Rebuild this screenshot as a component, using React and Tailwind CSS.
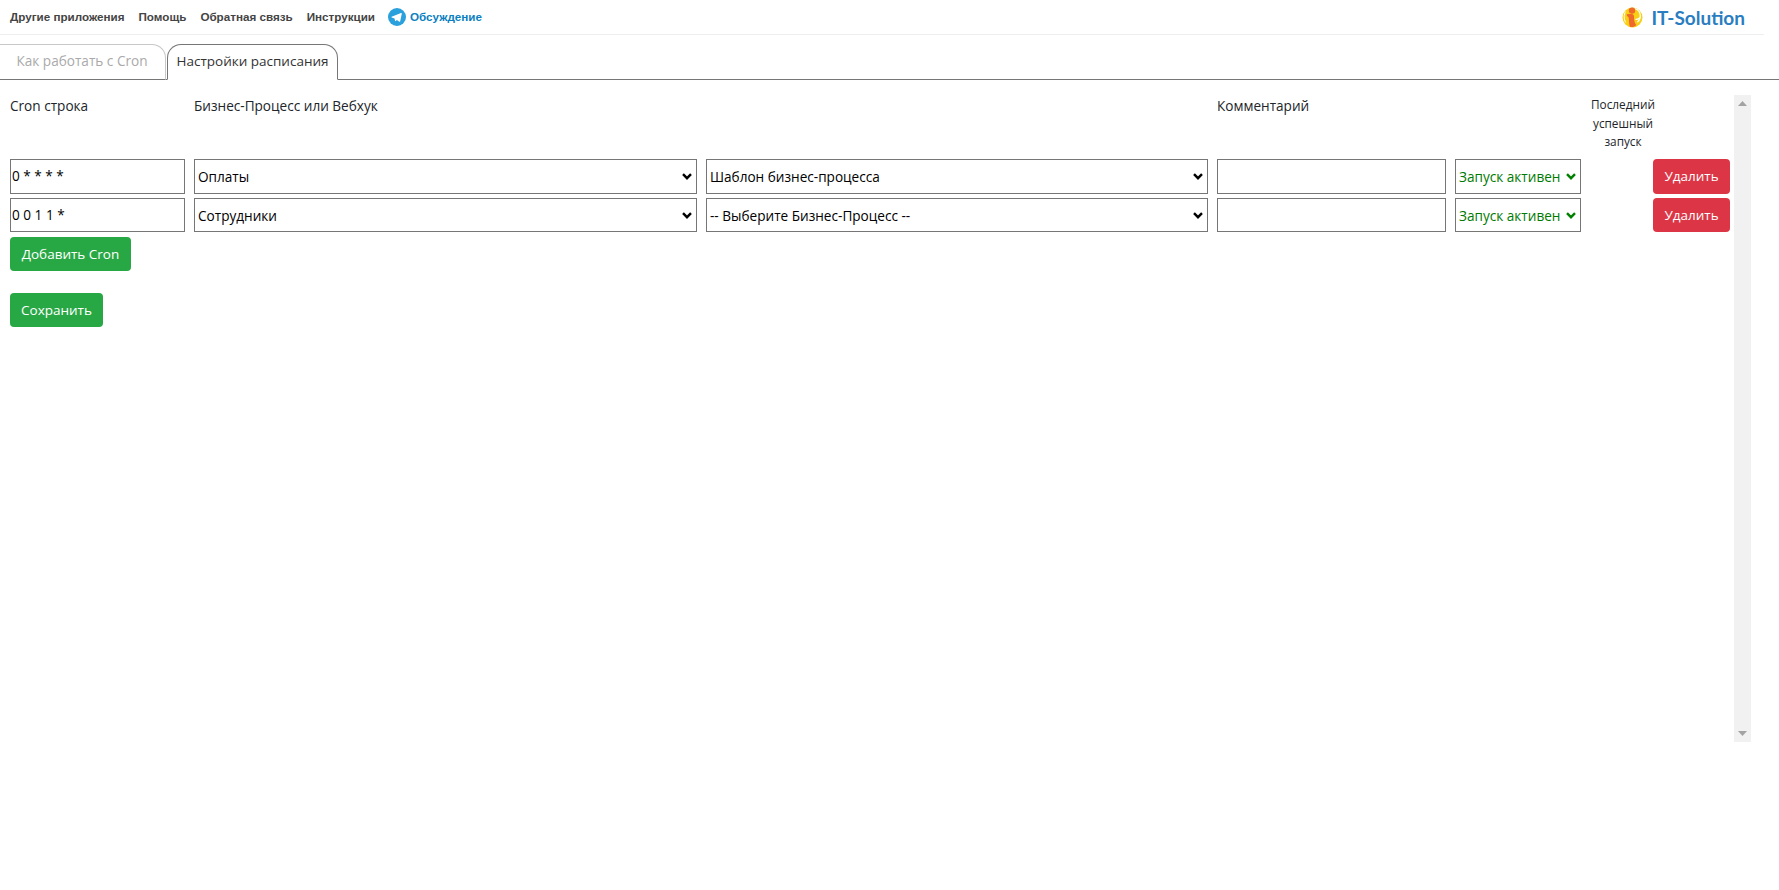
import React from "react";

const seg = { fontFamily: '"Open Sans", "Noto Sans", sans-serif' };

function Telegram() {
  return (
    <svg width="18" height="18" viewBox="0 0 18 18" className="shrink-0">
      <circle cx="9" cy="9" r="9" fill="#2aa0dc" />
      <path d="M3.600 8.800 13 5.100c.5-.2.900.1.800.7l-1.600 7.500c-.1.500-.5.700-.9.400L8.900 12l-1.200 1.100c-.2.200-.4.200-.5-.1l-.7-2.600-2.800-.9c-.5-.2-.5-.5-.1-.7Z" fill="#fff" />
    </svg>
  );
}

function Logo() {
  return (
    <svg width="21" height="21" viewBox="0 0 21 21" className="shrink-0">
      <circle cx="10.500" cy="10.500" r="10" fill="#f8cf13" />
      <path d="M12.800 1.500c3.200 1 5.500 4 5.500 7.500 0 2.500-1.100 4.700-2.900 6.200" fill="none" stroke="#fff" strokeWidth="1.300" />
      <path d="M13.500 12.300c2 .3 3.500-.5 4.600-2" fill="none" stroke="#fff" strokeWidth="1.200" />
      <circle cx="10" cy="3.600" r="3.200" fill="#f0692c" />
      <path d="M4.500 7.500c1.500-.5 3.200-.6 5-.4 1.600.2 2.500 1 2.500 2.600 0 3.200.3 6 2.300 8.300-1.500 1.700-4.300 2.600-6.400 1.800-1-3-.9-6.500-1.200-9.300C5.800 9.700 5 9 4.500 7.500Z" fill="#f0692c" />
      <path d="M3.700 4.500C1.700 7.500 1.700 12 3.700 15.500" fill="none" stroke="#fff" strokeWidth="1" />
    </svg>
  );
}

function Field({ children, className = "" }) {
  return (
    <div className={`flex items-center border border-[#767676] bg-white text-[13.6px] ${className}`}>
      {children}
    </div>
  );
}

function Chevron({ color = "#000" }) {
  return (
    <svg width="10" height="7" viewBox="0 0 10 7" className="shrink-0">
      <path d="M1 1.200 5 5.200 9 1.200" fill="none" stroke={color} strokeWidth="2.400" />
    </svg>
  );
}

function SelectBox({ label, className = "", green = false }) {
  return (
    <Field className={`justify-between pl-[2px] pr-[4px] ${green ? "text-[#007a00]" : "text-black"} ${className}`}>
      <span className="whitespace-nowrap pl-px pt-[2px]">{label}</span>
      <Chevron color={green ? "#008000" : "#000"} />
    </Field>
  );
}

function Btn({ children, red = false, className = "" }) {
  return (
    <button className={`flex h-[34px] items-center justify-center rounded-[4px] text-[13.5px] text-white ${red ? "bg-[#dc3545]" : "bg-[#28a745]"} ${className}`}>
      {children}
    </button>
  );
}

function Row({ cron, group, template, h }) {
  return (
    <div className={`flex ${h}`}>
      <Field className="w-[175px] pl-px text-black"><span>{cron}</span></Field>
      <SelectBox label={group} className="ml-[9px] w-[503px]" />
      <SelectBox label={template} className="ml-[9px] w-[502px]" />
      <Field className="ml-[9px] w-[229px]" />
      <SelectBox label="Запуск активен" green className="ml-[9px] w-[126px]" />
      <Btn red className="ml-[72px] h-full w-[77px]">Удалить</Btn>
    </div>
  );
}

export default function App() {
  return (
    <div className="h-[890px] w-full overflow-hidden bg-white text-[#212529]" style={seg}>
      <header className="flex h-[35px] w-[1764px] items-center justify-between border-b border-[#eeeeee] pl-[10px] pr-[19px]">
        <nav className="flex items-center text-[11.65px] font-bold text-[#444444]" style={{ fontFamily: '"Liberation Sans", sans-serif' }}>
          <a>Другие приложения</a>
          <a className="ml-[14px]">Помощь</a>
          <a className="ml-[14px]">Обратная связь</a>
          <a className="ml-[14px]">Инструкции</a>
          <a className="ml-[13px] flex items-center gap-[4px] text-[#0b7fc1]"><Telegram />Обсуждение</a>
        </nav>
        <div className="flex items-center gap-[8px]">
          <Logo />
          <span className="text-[19px] font-bold leading-none text-[#2a7dc0]" style={{ fontFamily: 'Lato, sans-serif' }}>IT-Solution</span>
        </div>
      </header>

      <div className="mt-[9px] flex h-[36px] border-b border-[#767676] text-[13.6px]">
        <div className="-ml-[14px] -mb-px flex w-[180px] items-center justify-center rounded-t-[14px] border border-[#c8c8c8] border-b-[#767676] pb-[2px] pl-[12px] text-[#aaaaaa]">Как работать с Cron</div>
        <div className="-mb-px ml-px flex w-[171px] items-center justify-center rounded-t-[14px] border border-[#767676] border-b-white pb-[2px] text-[13.5px] text-[#333333]">Настройки расписания</div>
      </div>

      <div className="flex pl-[10px] pt-[15px]">
        <main className="w-[1724px]">
          <div className="flex h-[64px] text-[13.6px] leading-[21px]">
            <div className="w-[184px]">Cron строка</div>
            <div className="w-[1023px]">Бизнес-Процесс или Вебхук</div>
            <div className="w-[371px]">Комментарий</div>
            <div className="w-[70px] text-center text-[11.8px] leading-[18.5px]">Последний успешный запуск</div>
          </div>
          <div className="flex flex-col gap-[4px]">
            <Row cron="0 * * * *" group="Оплаты" template="Шаблон бизнес-процесса" h="h-[35px]" />
            <Row cron="0 0 1 1 *" group="Сотрудники" template="-- Выберите Бизнес-Процесс --" h="h-[34px]" />
          </div>
          <Btn className="mt-[5px] w-[121px]">Добавить Cron</Btn>
          <Btn className="mt-[22px] w-[93px]">Сохранить</Btn>
        </main>
        <div className="flex h-[647px] w-[17px] flex-col items-center justify-between bg-[#f1f1f1] py-[6px]">
          <svg width="9" height="5" viewBox="0 0 9 5"><path d="M4.500 0 9 5H0Z" fill="#a3a3a3" /></svg>
          <svg width="9" height="5" viewBox="0 0 9 5"><path d="M0 0h9L4.500 5Z" fill="#a3a3a3" /></svg>
        </div>
      </div>
    </div>
  );
}
